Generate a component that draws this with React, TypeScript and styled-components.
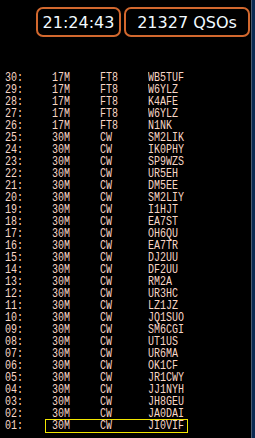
import styled, { createGlobalStyle } from "styled-components";

type Qso = { n: number; band: string; mode: string; call: string };

const calls = [
  "WB5TUF", "W6YLZ", "K4AFE", "W6YLZ", "N1NK", "SM2LIK", "IK0PHY", "SP9WZS", "UR5EH", "DM5EE",
  "SM2LIY", "I1HJT", "EA7ST", "OH6QU", "EA7TR", "DJ2UU", "DF2UU", "RM2A", "UR3HC", "LZ1JZ",
  "JQ1SUO", "SM6CGI", "UT1US", "UR6MA", "OK1CF", "JR1CWY", "JJ1NYH", "JH8GEU", "JA0DAI", "JI0VIF",
];

const qsos: Qso[] = calls.map((call, i) => ({
  n: 30 - i,
  band: i < 5 ? "17M" : "30M",
  mode: i < 5 ? "FT8" : "CW",
  call,
}));

const GlobalStyle = createGlobalStyle`
    html, body {
        margin: 0;
        padding: 0;
        background: #000;
    }
`

const Screen = styled.div`
    display: flex;
    width: 255px;
    height: 438px;
    background: #000;
    overflow: hidden;
`

const Main = styled.div`
    width: 251px;
    display: flex;
    flex-direction: column;
`

const ScrollEdge = styled.div`
    width: 3px;
    border-left: 1px solid #4a5a70;
    background: #0b2a52;
`

const Header = styled.div`
    display: flex;
    justify-content: flex-end;
    gap: 3px;
    padding: 7px 1px 0 0;
`

const Badge = styled.div<{ $width: number }>`
    box-sizing: border-box;
    width: ${p => p.$width}px;
    height: 30px;
    border: 2px solid #d2682e;
    border-radius: 7px;
    display: flex;
    align-items: center;
    justify-content: center;
    color: #f2faff;
    font-family: "DejaVu Sans", Verdana, sans-serif;
    font-size: 16px;
`

const List = styled.div`
    margin-top: 35px;
    display: flex;
    flex-direction: column;
`

const Row = styled.div`
    display: flex;
    align-items: center;
    height: 12px;
    padding-left: 5px;
    color: #f8d6c6;
    font-family: "Liberation Mono", "DejaVu Sans Mono", monospace;
    font-size: 10px;
`

const Detail = styled.div<{ $active?: boolean }>`
    display: flex;
    align-items: center;
    width: 141px;
    height: 12px;
    padding-left: 6px;
    box-sizing: border-box;
    outline: ${p => (p.$active ? "1px solid #f2e600" : "none")};
`

// tall, narrow terminal glyphs: 6px advance, ~9px caps
const Cell = styled.span<{ $width?: number }>`
    display: inline-block;
    flex: none;
    width: ${p => (p.$width ? `${p.$width}px` : "auto")};
    height: 8px;
    line-height: 8px;
    white-space: nowrap;
    transform: scaleY(1.35);
    transform-origin: 50% 50%;
`

export default function App() {
  return (
    <>
      <GlobalStyle />
      <Screen>
        <Main>
          <Header>
            <Badge $width={85}>21:24:43</Badge>
            <Badge $width={126}>21327 QSOs</Badge>
          </Header>
          <List>
            {qsos.map(q => (
              <Row key={q.n}>
                <Cell $width={41}>{String(q.n).padStart(2, "0")}:</Cell>
                <Detail $active={q.n === 1}>
                  <Cell $width={48}>{q.band}</Cell>
                  <Cell $width={48}>{q.mode}</Cell>
                  <Cell>{q.call}</Cell>
                </Detail>
              </Row>
            ))}
          </List>
        </Main>
        <ScrollEdge />
      </Screen>
    </>
  );
}
